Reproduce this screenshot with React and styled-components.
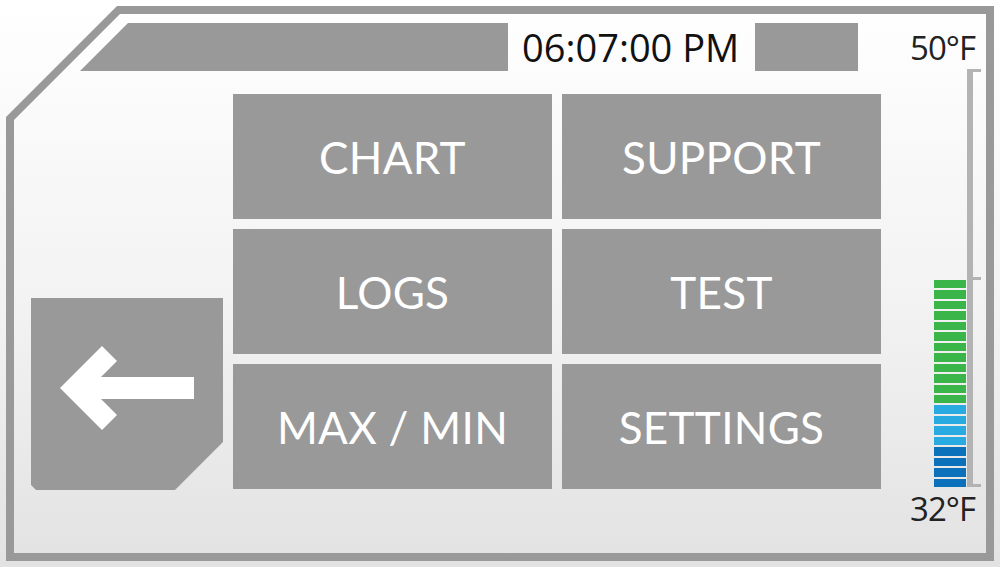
import React from "react";
import styled, { createGlobalStyle } from "styled-components";

const PAGE_BG = "linear-gradient(180deg, #ffffff 0%, #f2f2f2 55%, #e2e2e2 100%)";
const GREY = "#999999";

const SEGMENTS = [
  ...Array(12).fill("#39b54a"),
  ...Array(4).fill("#29abe2"),
  ...Array(4).fill("#0b71bb"),
];

const MENU = ["CHART", "SUPPORT", "LOGS", "TEST", "MAX / MIN", "SETTINGS"];

const GlobalStyle = createGlobalStyle`
  html, body {
    margin: 0;
    padding: 0;
    width: 1000px;
    height: 567px;
    overflow: hidden;
  }
  body {
    background: ${PAGE_BG};
    background-attachment: fixed;
    font-family: "Open Sans", "Liberation Sans", sans-serif;
  }
`;

const Screen = styled.div`
  width: 1000px;
  height: 567px;
  box-sizing: border-box;
  padding: 6px;
`;

const Frame = styled.div`
  width: 100%;
  height: 100%;
  box-sizing: border-box;
  padding: 8px;
  background: ${GREY};
  clip-path: polygon(111px 0, 100% 0, 100% 100%, 0 100%, 0 111px);
`;

const Inner = styled.div`
  width: 100%;
  height: 100%;
  box-sizing: border-box;
  display: flex;
  background: ${PAGE_BG};
  background-attachment: fixed;
  clip-path: polygon(106px 0, 100% 0, 100% 100%, 0 100%, 0 106px);
`;

const Main = styled.div`
  width: 867px;
  display: flex;
  flex-direction: column;
  padding-top: 9px;
`;

const Header = styled.div`
  display: flex;
  align-items: center;
  height: 48px;
  margin-left: 66px;
`;

const HeaderBar = styled.div`
  width: 428px;
  height: 48px;
  background: ${GREY};
  clip-path: polygon(48px 0, 100% 0, 100% 100%, 0 100%);
`;

const Clock = styled.div`
  margin: 0 16px 0 14px;
  font-size: 38px;
  line-height: 48px;
  color: #111;
  white-space: nowrap;
`;

const HeaderBlock = styled.div`
  width: 103px;
  height: 48px;
  background: ${GREY};
`;

const Body = styled.div`
  display: flex;
  align-items: flex-end;
  gap: 10px;
  margin-top: 23px;
  padding-left: 17px;
`;

const BackButton = styled.button`
  width: 192px;
  height: 192px;
  margin-bottom: -1px;
  padding: 0;
  border: 0;
  background: ${GREY};
  clip-path: polygon(0 0, 100% 0, 100% 144px, 144px 100%, 5px 100%, 0 187px);
  display: block;
  cursor: pointer;
`;

const MenuGrid = styled.div`
  display: grid;
  grid-template-columns: 319px 319px;
  grid-auto-rows: 125px;
  gap: 10px;
`;

const MenuButton = styled.button`
  border: 0;
  padding: 0;
  background: ${GREY};
  color: #ffffff;
  font-family: Lato, "Open Sans", sans-serif;
  font-size: 44px;
  font-weight: 400;
  letter-spacing: 0.3px;
  display: flex;
  align-items: center;
  justify-content: center;
  cursor: pointer;
`;

const Thermo = styled.div`
  flex: 1;
  display: flex;
  flex-direction: column;
  align-items: flex-end;
  padding: 16px 5px 0 0;
`;

const TempLabel = styled.div`
  font-size: 33px;
  line-height: 36px;
  color: #222;
  letter-spacing: -1px;
  margin-right: 6px;
  margin-top: ${(p) => p.$gap || 0}px;
`;

const Scale = styled.div`
  display: flex;
  align-items: flex-end;
  height: 418px;
  margin-top: 3px;
`;

const Bars = styled.div`
  width: 32px;
  height: 207px;
  display: flex;
  flex-direction: column;
  gap: 2px;
  margin-right: 1px;
`;

const Segment = styled.div`
  flex: 1;
  background: ${(p) => p.$color};
`;

const Track = styled.div`
  width: 14px;
  height: 100%;
  box-sizing: border-box;
  border-top: 3px solid #b3b3b3;
  border-bottom: 3px solid #b3b3b3;
  background:
    linear-gradient(#b3b3b3, #b3b3b3) 0 50% / 100% 3px no-repeat,
    linear-gradient(90deg, #b3b3b3 6px, transparent 6px);
`;

function BackArrow() {
  return (
    <svg width="192" height="192" viewBox="0 0 192 192">
      <path
        d="M29 90 L71 48 L86 63 L70 79 L163 79 L163 101 L70 101 L86 117 L71 132 Z"
        fill="#ffffff"
      />
    </svg>
  );
}

export default function App() {
  return (
    <Screen>
      <GlobalStyle />
      <Frame>
        <Inner>
          <Main>
            <Header>
              <HeaderBar />
              <Clock>06:07:00 PM</Clock>
              <HeaderBlock />
            </Header>
            <Body>
              <BackButton aria-label="Back">
                <BackArrow />
              </BackButton>
              <MenuGrid>
                {MENU.map((label) => (
                  <MenuButton key={label}>{label}</MenuButton>
                ))}
              </MenuGrid>
            </Body>
          </Main>
          <Thermo>
            <TempLabel>50°F</TempLabel>
            <Scale>
              <Bars>
                {SEGMENTS.map((c, i) => (
                  <Segment key={i} $color={c} />
                ))}
              </Bars>
              <Track />
            </Scale>
            <TempLabel $gap={4}>32°F</TempLabel>
          </Thermo>
        </Inner>
      </Frame>
    </Screen>
  );
}
